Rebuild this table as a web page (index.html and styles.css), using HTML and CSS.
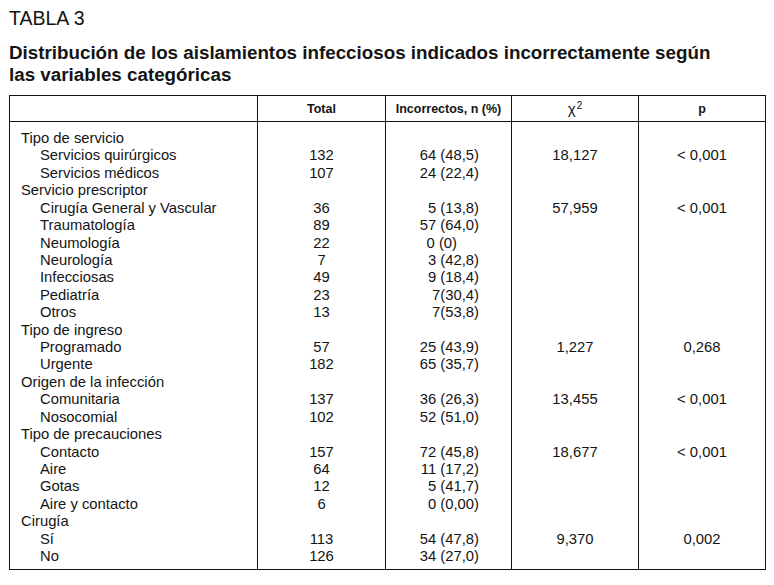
FILE: index.html
```html
<!DOCTYPE html>
<html lang="es">
<head>
<meta charset="utf-8">
<title>Tabla 3</title>
<link rel="stylesheet" href="styles.css">
</head>
<body>
<div class="page">
  <div class="label">TABLA 3</div>
  <h1 class="heading">Distribución de los aislamientos infecciosos indicados incorrectamente según las variables categóricas</h1>
  <table class="data">
    <colgroup>
      <col class="c1"><col class="c2"><col class="c3"><col class="c4"><col class="c5">
    </colgroup>
    <thead>
      <tr>
        <th></th>
        <th>Total</th>
        <th>Incorrectos, n (%)</th>
        <th class="chi">χ<span class="sup">2</span></th>
        <th>p</th>
      </tr>
    </thead>
    <tbody>
      <tr class="first"><td class="cat">Tipo de servicio</td><td></td><td></td><td></td><td></td></tr>
      <tr><td class="sub">Servicios quirúrgicos</td><td class="num">132</td><td class="inc">64 (48,5)</td><td class="num">18,127</td><td class="num">&lt; 0,001</td></tr>
      <tr><td class="sub">Servicios médicos</td><td class="num">107</td><td class="inc">24 (22,4)</td><td></td><td></td></tr>
      <tr><td class="cat">Servicio prescriptor</td><td></td><td></td><td></td><td></td></tr>
      <tr><td class="sub">Cirugía General y Vascular</td><td class="num">36</td><td class="inc">5 (13,8)</td><td class="num">57,959</td><td class="num">&lt; 0,001</td></tr>
      <tr><td class="sub">Traumatología</td><td class="num">89</td><td class="inc">57 (64,0)</td><td></td><td></td></tr>
      <tr><td class="sub">Neumología</td><td class="num">22</td><td class="inc"><span class="short">0 (0)</span></td><td></td><td></td></tr>
      <tr><td class="sub">Neurología</td><td class="num">7</td><td class="inc">3 (42,8)</td><td></td><td></td></tr>
      <tr><td class="sub">Infecciosas</td><td class="num">49</td><td class="inc">9 (18,4)</td><td></td><td></td></tr>
      <tr><td class="sub">Pediatría</td><td class="num">23</td><td class="inc">7(30,4)</td><td></td><td></td></tr>
      <tr><td class="sub">Otros</td><td class="num">13</td><td class="inc">7(53,8)</td><td></td><td></td></tr>
      <tr><td class="cat">Tipo de ingreso</td><td></td><td></td><td></td><td></td></tr>
      <tr><td class="sub">Programado</td><td class="num">57</td><td class="inc">25 (43,9)</td><td class="num">1,227</td><td class="num">0,268</td></tr>
      <tr><td class="sub">Urgente</td><td class="num">182</td><td class="inc">65 (35,7)</td><td></td><td></td></tr>
      <tr><td class="cat">Origen de la infección</td><td></td><td></td><td></td><td></td></tr>
      <tr><td class="sub">Comunitaria</td><td class="num">137</td><td class="inc">36 (26,3)</td><td class="num">13,455</td><td class="num">&lt; 0,001</td></tr>
      <tr><td class="sub">Nosocomial</td><td class="num">102</td><td class="inc">52 (51,0)</td><td></td><td></td></tr>
      <tr><td class="cat">Tipo de precauciones</td><td></td><td></td><td></td><td></td></tr>
      <tr><td class="sub">Contacto</td><td class="num">157</td><td class="inc">72 (45,8)</td><td class="num">18,677</td><td class="num">&lt; 0,001</td></tr>
      <tr><td class="sub">Aire</td><td class="num">64</td><td class="inc">11 (17,2)</td><td></td><td></td></tr>
      <tr><td class="sub">Gotas</td><td class="num">12</td><td class="inc">5 (41,7)</td><td></td><td></td></tr>
      <tr><td class="sub">Aire y contacto</td><td class="num">6</td><td class="inc">0 (0,00)</td><td></td><td></td></tr>
      <tr><td class="cat">Cirugía</td><td></td><td></td><td></td><td></td></tr>
      <tr><td class="sub">Sí</td><td class="num">113</td><td class="inc">54 (47,8)</td><td class="num">9,370</td><td class="num">0,002</td></tr>
      <tr class="last"><td class="sub">No</td><td class="num">126</td><td class="inc">34 (27,0)</td><td></td><td></td></tr>
    </tbody>
  </table>
</div>
</body>
</html>
```

FILE: styles.css
```css
html, body {
  margin: 0;
  padding: 0;
  background: #ffffff;
}

body {
  font-family: "Liberation Sans", Arial, sans-serif;
  color: #141414;
}

.page {
  padding: 6px 9px 0 9px;
}

.label {
  font-size: 19.5px;
  line-height: 24px;
  font-weight: normal;
}

.heading {
  margin: 12px 0 0 0;
  font-size: 18.8px;
  line-height: 22px;
  font-weight: bold;
  width: 730px;
}

.data {
  margin-top: 9px;
  border-collapse: collapse;
  table-layout: fixed;
  width: 756px;
  font-size: 14.8px;
  border: 1px solid #111;
}

.c1 { width: 248px; }
.c2 { width: 128px; }
.c3 { width: 126px; }
.c4 { width: 127px; }
.c5 { width: 127px; }

.data th {
  height: 25px;
  padding: 0;
  font-size: 12.5px;
  font-weight: bold;
  text-align: center;
  border: 1px solid #111;
}

.data th.chi {
  font-weight: normal;
  font-size: 15px;
}

.sup {
  font-size: 10px;
  vertical-align: 5px;
  margin-left: 1px;
}

.data td {
  padding: 0;
  line-height: 17.42px;
  height: 17.42px;
  white-space: nowrap;
  border-left: 1px solid #111;
  border-right: 1px solid #111;
}

.data tr.first td {
  padding-top: 8px;
}

.data tr.last td {
  padding-bottom: 3px;
}

.cat {
  padding-left: 11px !important;
}

.sub {
  padding-left: 30px !important;
}

.num {
  text-align: center;
}

.inc {
  text-align: right;
  padding-right: 32px !important;
}

.short {
  display: inline-block;
  padding-right: 22px;
}
```
